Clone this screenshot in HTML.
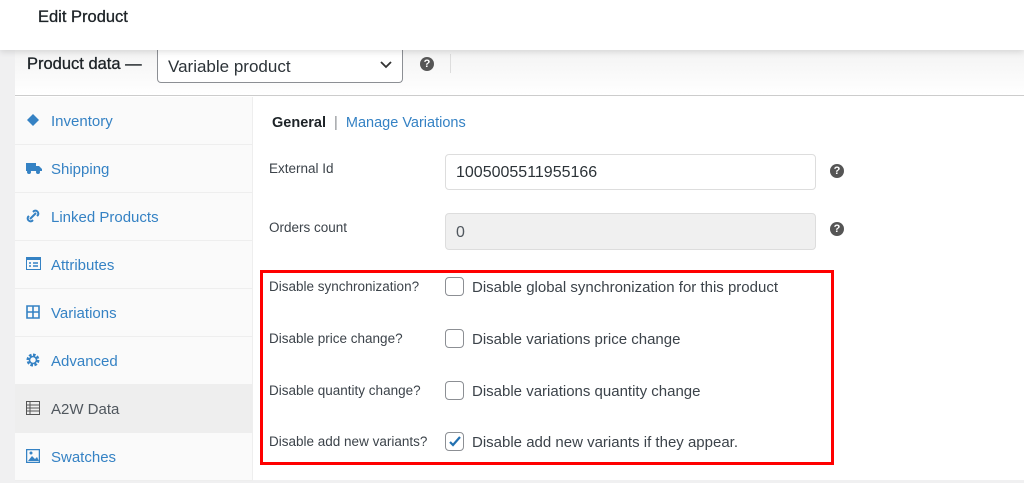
<!DOCTYPE html><html><head><style>
*{margin:0;padding:0;box-sizing:border-box}
body{width:1024px;height:480px;overflow:hidden;background:#f0f0f1;font-family:"Liberation Sans",sans-serif;position:relative}
.a{position:absolute}
.top{left:0;top:0;width:1024px;height:50px;background:#fff;box-shadow:0 2px 6px rgba(0,0,0,.12);z-index:2}
.tab{left:15px;width:238px;height:48px;border-bottom:1px solid #eee;color:#3582c4;font-size:15px;line-height:50px;padding-left:36px}
.tab svg{position:absolute;left:11px;top:16px}
.lbl{font-size:13.5px;color:#3c434a;left:269px}
.cb{left:445px;width:19px;height:19px;border:1px solid #8c8f94;border-radius:4px;background:#fff}
.ct{left:472px;font-size:15px;color:#3c434a}
.q{width:14px;height:14px;border-radius:50%;background:#555;color:#fff;font-size:11px;font-weight:bold;text-align:center;line-height:14px}
</style></head><body>
<div class="a top"><div class="a" style="left:38px;top:8px;font-size:16.5px;color:#1d2327;-webkit-text-stroke:.3px #1d2327">Edit Product</div></div>
<div class="a" style="left:15px;top:50px;width:1009px;height:430px;background:#fff"></div>
<div class="a" style="left:15px;top:50px;width:1009px;height:46px;background:linear-gradient(#f3f3f3,#fff);border-bottom:1px solid #ccc"></div>
<div class="a" style="left:27px;top:55px;font-size:16.5px;color:#1d2327;-webkit-text-stroke:.3px #1d2327">Product data —</div>
<div class="a" style="left:157px;top:50px;width:246px;height:33px;border:1px solid #8c8f94;border-top:none;border-radius:0 0 4px 4px;background:#fff;font-size:17px;color:#2c3338;padding:7px 10px">Variable product
<svg class="a" style="left:222px;top:11px" width="12" height="8"><path d="M1 1l5 5 5-5" stroke="#333" stroke-width="1.8" fill="none"/></svg></div>
<div class="a q" style="left:420px;top:57px">?</div>
<div class="a" style="left:450px;top:54px;width:1px;height:19px;background:#ddd"></div>
<div class="a" style="left:15px;top:97px;width:238px;height:383px;background:#fafafa;border-right:1px solid #eee"></div>
<div class="a tab" style="top:97px"><svg width="14" height="14"><path d="M7 1l6 6-6 6-6-6z" fill="#3582c4"/></svg>Inventory</div>
<div class="a tab" style="top:145px"><svg width="16" height="14"><rect x="0" y="2" width="10" height="8" fill="#3582c4"/><path d="M10 5h3l3 3v2h-6z" fill="#3582c4"/><circle cx="3" cy="11" r="2" fill="#3582c4"/><circle cx="12" cy="11" r="2" fill="#3582c4"/></svg>Shipping</div>
<div class="a tab" style="top:193px"><svg width="14" height="14"><path d="M4 10l6-6M3 7l-1 1a3 3 0 004 4l1-1M11 7l1-1a3 3 0 00-4-4L7 3" stroke="#3582c4" stroke-width="2" fill="none"/></svg>Linked Products</div>
<div class="a tab" style="top:241px"><svg width="15" height="13"><rect x="0.5" y="0.5" width="14" height="12" fill="none" stroke="#3582c4"/><rect x="0" y="0" width="15" height="3" fill="#3582c4"/><path d="M3 6h2M3 9h2M7 6h5M7 9h5" stroke="#3582c4" stroke-width="1.5"/></svg>Attributes</div>
<div class="a tab" style="top:289px"><svg width="14" height="14"><path d="M1 1h12v12H1zM7 1v12M1 7h12" stroke="#3582c4" stroke-width="1.6" fill="none"/></svg>Variations</div>
<div class="a tab" style="top:337px"><svg width="14" height="14"><circle cx="7" cy="7" r="5" fill="none" stroke="#3582c4" stroke-width="3" stroke-dasharray="2.5 1.4"/><circle cx="7" cy="7" r="3.5" fill="none" stroke="#3582c4" stroke-width="1.6"/></svg>Advanced</div>
<div class="a tab" style="top:385px;background:#eee;color:#50575e"><svg width="14" height="14"><rect x="0.5" y="0.5" width="13" height="13" fill="none" stroke="#555"/><path d="M1 4h12M1 7h12M1 10h12M4 1v12" stroke="#555"/></svg>A2W Data</div>
<div class="a tab" style="top:433px"><svg width="14" height="14"><rect x="0.5" y="0.5" width="13" height="13" fill="none" stroke="#3582c4" stroke-width="1.5"/><path d="M2 12l4-5 3 3 2-2 2 4z" fill="#3582c4"/><circle cx="5" cy="4" r="1.5" fill="#3582c4"/></svg>Swatches</div>
<div class="a" style="left:272px;top:115px;font-size:14.5px;color:#1d2327"><b>General</b> <span style="color:#8c8f94">&nbsp;|&nbsp;</span> <span style="color:#3582c4">Manage Variations</span></div>
<div class="a lbl" style="top:161px">External Id</div>
<div class="a" style="left:445px;top:154px;width:371px;height:36px;border:1px solid #ddd;border-radius:4px;font-size:16px;color:#2c3338;padding:9px 10px">1005005511955166</div>
<div class="a q" style="left:830px;top:164px">?</div>
<div class="a lbl" style="top:220px">Orders count</div>
<div class="a" style="left:445px;top:213px;width:371px;height:37px;border:1px solid #ddd;border-radius:4px;background:#f0f0f0;font-size:16px;color:#50575e;padding:10px 10px">0</div>
<div class="a q" style="left:830px;top:222px">?</div>
<div class="a" style="left:260px;top:270px;width:574px;height:195px;border:3px solid #f00"></div>
<div class="a lbl" style="top:279px">Disable synchronization?</div><div class="a cb" style="top:277px"></div><div class="a ct" style="top:279px">Disable global synchronization for this product</div>
<div class="a lbl" style="top:331px">Disable price change?</div><div class="a cb" style="top:329px"></div><div class="a ct" style="top:331px">Disable variations price change</div>
<div class="a lbl" style="top:383px">Disable quantity change?</div><div class="a cb" style="top:381px"></div><div class="a ct" style="top:383px">Disable variations quantity change</div>
<div class="a lbl" style="top:434px">Disable add new variants?</div><div class="a cb" style="top:432px"><svg width="17" height="17"><path d="M4 9l3 3 7-8" stroke="#2271b1" stroke-width="2.2" fill="none"/></svg></div><div class="a ct" style="top:434px">Disable add new variants if they appear.</div>
</body></html>
